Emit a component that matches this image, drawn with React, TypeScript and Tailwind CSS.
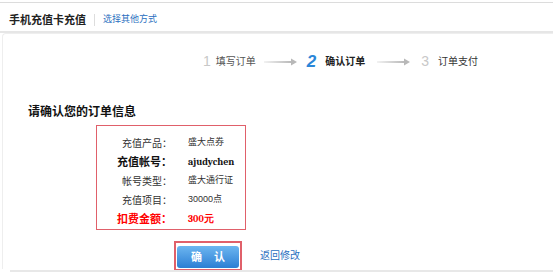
import React from "react"

function Arrow() {
  return (
    <svg width="34" height="8" viewBox="0 0 34 8">
      <defs>
        <linearGradient id="ag" x1="0" x2="1" y1="0" y2="0">
          <stop offset="0" stopColor="#f2f2f2" />
          <stop offset="1" stopColor="#b8b8b8" />
        </linearGradient>
      </defs>
      <rect x="0" y="3" width="28" height="2" fill="url(#ag)" />
      <path d="M27 0.5 L33 4 L27 7.5 Z" fill="#b8b8b8" />
    </svg>
  )
}

const rows = [
  { label: "充值产品：", value: "盛大点券" },
  { label: "充值帐号：", value: "ajudychen", strong: true },
  { label: "帐号类型：", value: "盛大通行证" },
  { label: "充值项目：", value: "30000点" },
  { label: "扣费金额：", value: "300元", red: true },
]

export default function App() {
  return (
    <div className="relative h-[274px] w-[553px] overflow-hidden bg-white text-[#333] font-['Liberation_Sans','Noto_Sans_CJK_SC',sans-serif]">
      <div className="h-[3px] border-b border-[#dcdcdc]" />
      <div className="flex h-[30px] items-center border-b-2 border-[#e6e6e6] px-[9px] pt-[6px]">
        <span className="text-[11px] font-bold text-[#222]">手机充值卡充值</span>
        <span className="ml-[8px] mr-[8px] h-[12px] border-l border-[#ddd]" />
        <a className="text-[9px] text-[#2a6fc0]">选择其他方式</a>
      </div>

      <div className="ml-[2px] h-[236px] rounded-tl-[4px] border-l border-t border-[#eeeeee]">
        <div className="flex items-center whitespace-nowrap pl-[200px] pt-[15px] text-[10px]">
          <span className="text-[14px] text-[#c8c8c8]">1</span>
          <span className="ml-[5px] text-[#555]">填写订单</span>
          <span className="ml-[8px] flex">
            <Arrow />
          </span>
          <span className="ml-[9px] text-[17px] font-bold italic text-[#2b86d8]">2</span>
          <span className="ml-[9px] font-bold text-[#222]">确认订单</span>
          <span className="ml-[12px] flex">
            <Arrow />
          </span>
          <span className="ml-[10px] text-[14px] text-[#c8c8c8]">3</span>
          <span className="ml-[9px] text-[#333]">订单支付</span>
        </div>

        <div className="ml-[25px] mt-[28px] text-[12px] font-bold text-[#111]">请确认您的订单信息</div>

        <div className="ml-[93px] mt-[4px] flex h-[105px] w-[150px] flex-col border border-[#e0606a] pl-[13px] pt-[8px]">
          {rows.map((r) => (
            <div key={r.label} className="flex h-[19px] items-center whitespace-nowrap">
              <span
                className={
                  "w-[62px] text-right " +
                  (r.red
                    ? "text-[11px] font-bold text-[#ff0000]"
                    : r.strong
                    ? "text-[11px] font-bold text-[#111]"
                    : "text-[10px] text-[#333]")
                }
              >
                {r.label}
              </span>
              <span
                className={
                  "ml-[16px] " +
                  (r.red
                    ? "font-serif text-[10px] font-bold text-[#ff0000]"
                    : r.strong
                    ? "font-serif text-[10px] font-bold text-[#111]"
                    : "text-[9px] text-[#333]")
                }
              >
                {r.value}
              </span>
            </div>
          ))}
        </div>

        <div className="ml-[171px] mt-[11px] flex items-center">
          <div className="border-2 border-[#e0606a] p-[1px]">
            <button className="h-[22px] w-[62px] rounded-[3px] bg-gradient-to-b from-[#6cb6f0] to-[#2a7fd4] pl-[12px] text-[11px] font-bold tracking-[12px] text-white">
              确认
            </button>
          </div>
          <a className="ml-[18px] text-[10px] text-[#2a6fc0]">返回修改</a>
        </div>
      </div>
      <div className="absolute bottom-[2px] left-[10px] right-0 h-[2px] bg-[#e8e8e8]" />
    </div>
  )
}
